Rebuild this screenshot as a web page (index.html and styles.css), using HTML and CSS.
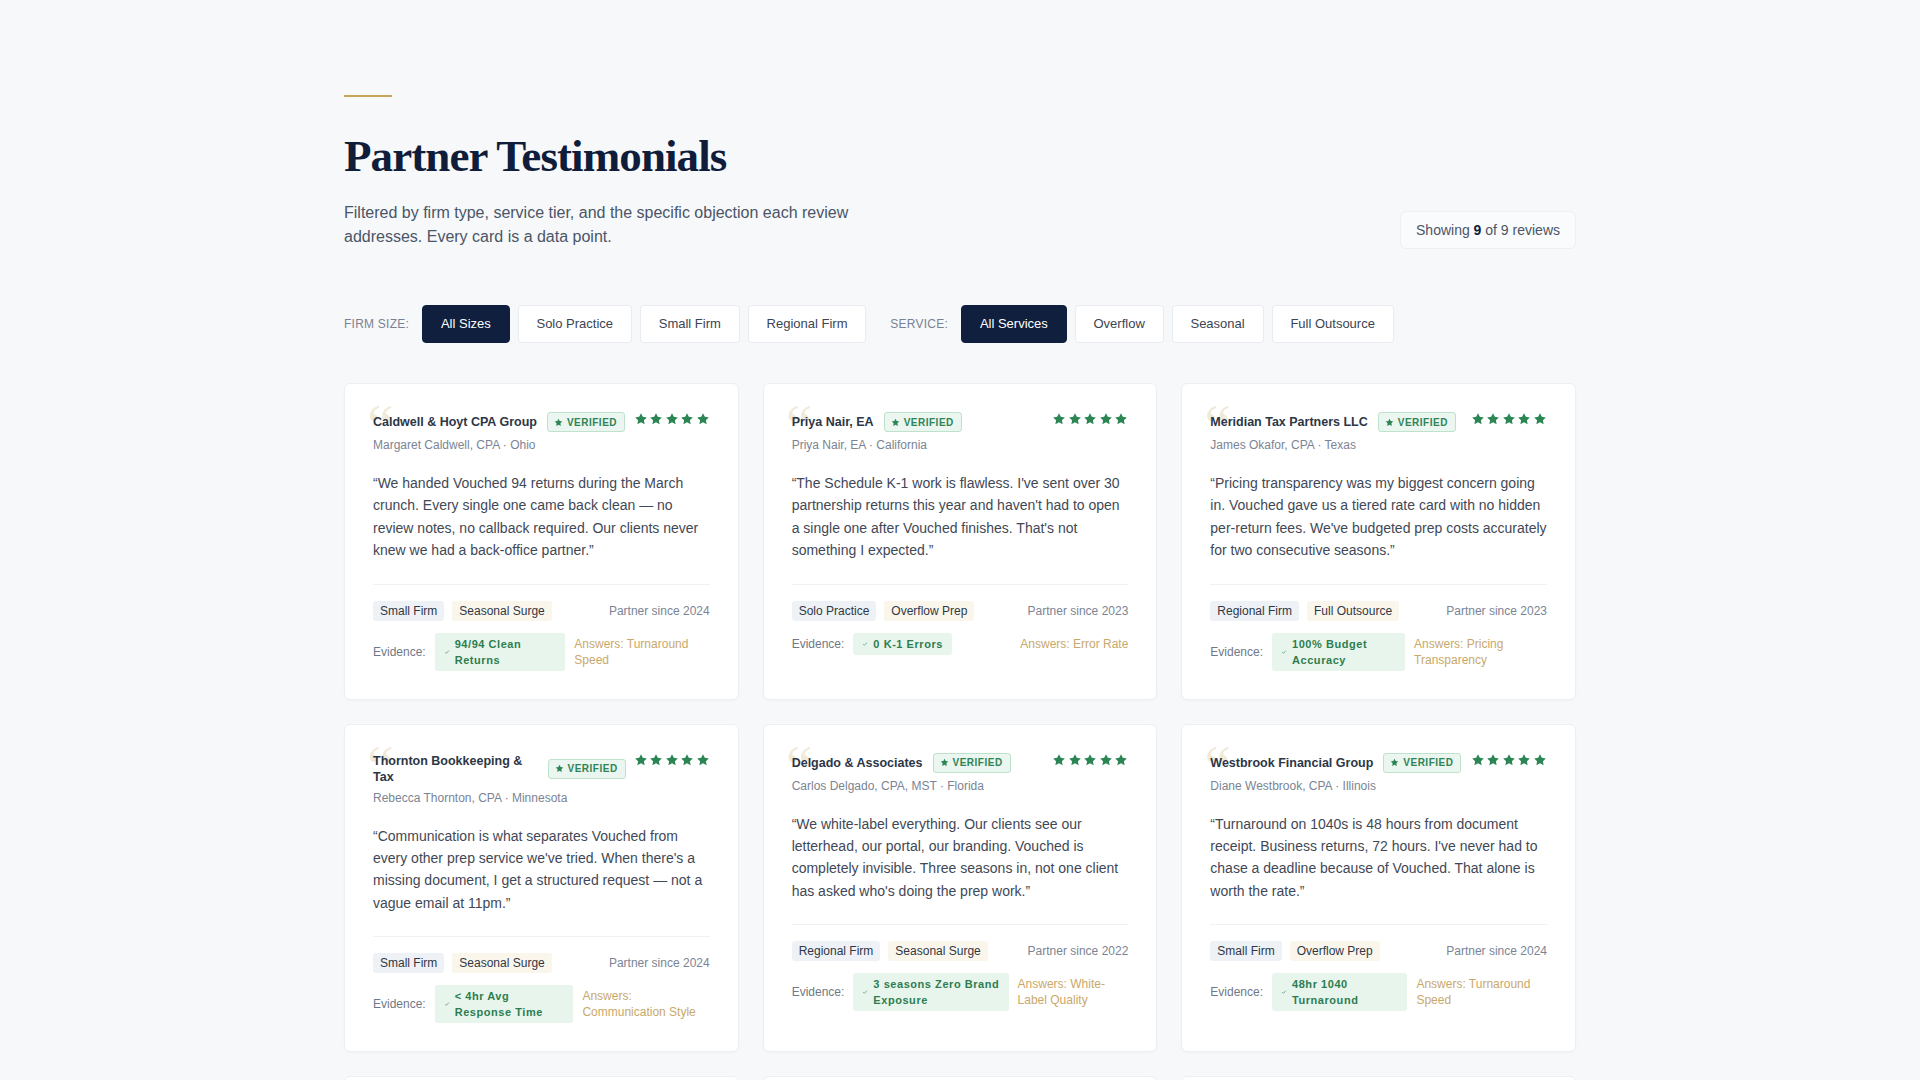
FILE: index.html
```html
<!DOCTYPE html>
<html lang="en">
<head>
<meta charset="utf-8">
<title>Partner Testimonials</title>
<link rel="stylesheet" href="styles.css">
</head>
<body>
<main class="page">
  <header class="head">
    <div class="accent"></div>
    <h1 class="title">Partner Testimonials</h1>
    <div class="intro">
      <p class="lede">Filtered by firm type, service tier, and the specific objection each review addresses. Every card is a data point.</p>
      <div class="count">Showing <b>9</b> of 9 reviews</div>
    </div>
  </header>

  <nav class="filters">
    <div class="group">
      <span class="label">Firm size:</span>
      <button class="chip on">All Sizes</button>
      <button class="chip">Solo Practice</button>
      <button class="chip">Small Firm</button>
      <button class="chip">Regional Firm</button>
    </div>
    <div class="group">
      <span class="label">Service:</span>
      <button class="chip on">All Services</button>
      <button class="chip">Overflow</button>
      <button class="chip">Seasonal</button>
      <button class="chip">Full Outsource</button>
    </div>
  </nav>

  <section class="grid">
    <article class="card">
      <span class="qmark">“</span>
      <div class="card-head">
        <div class="who">
          <div class="name-row"><span class="name">Caldwell &amp; Hoyt CPA Group</span><span class="verified"><svg class="vstar" viewBox="0 0 24 24"><path d="M12 2l3.09 6.26L22 9.27l-5 4.87 1.18 6.88L12 17.77l-6.18 3.25L7 14.14 2 9.27l6.91-1.01z"/></svg>VERIFIED</span></div>
          <div class="meta">Margaret Caldwell, CPA · Ohio</div>
        </div>
        <div class="stars"><svg viewBox="0 0 24 24"><path d="M12 2l3.09 6.26L22 9.27l-5 4.87 1.18 6.88L12 17.77l-6.18 3.25L7 14.14 2 9.27l6.91-1.01z"/></svg><svg viewBox="0 0 24 24"><path d="M12 2l3.09 6.26L22 9.27l-5 4.87 1.18 6.88L12 17.77l-6.18 3.25L7 14.14 2 9.27l6.91-1.01z"/></svg><svg viewBox="0 0 24 24"><path d="M12 2l3.09 6.26L22 9.27l-5 4.87 1.18 6.88L12 17.77l-6.18 3.25L7 14.14 2 9.27l6.91-1.01z"/></svg><svg viewBox="0 0 24 24"><path d="M12 2l3.09 6.26L22 9.27l-5 4.87 1.18 6.88L12 17.77l-6.18 3.25L7 14.14 2 9.27l6.91-1.01z"/></svg><svg viewBox="0 0 24 24"><path d="M12 2l3.09 6.26L22 9.27l-5 4.87 1.18 6.88L12 17.77l-6.18 3.25L7 14.14 2 9.27l6.91-1.01z"/></svg></div>
      </div>
      <p class="quote">“We handed Vouched 94 returns during the March crunch. Every single one came back clean — no review notes, no callback required. Our clients never knew we had a back-office partner.”</p>
      <div class="foot">
        <div class="tags"><span class="tag size">Small Firm</span><span class="tag svc">Seasonal Surge</span><span class="since">Partner since 2024</span></div>
        <div class="evidence"><span class="ev-label">Evidence:</span><span class="pill"><svg class="check" viewBox="0 0 10 10"><path d="M2 5.2l2 2 4-4.4"/></svg><span>94/94 Clean Returns</span></span><span class="answers">Answers: Turnaround Speed</span></div>
      </div>
    </article>

    <article class="card">
      <span class="qmark">“</span>
      <div class="card-head">
        <div class="who">
          <div class="name-row"><span class="name">Priya Nair, EA</span><span class="verified"><svg class="vstar" viewBox="0 0 24 24"><path d="M12 2l3.09 6.26L22 9.27l-5 4.87 1.18 6.88L12 17.77l-6.18 3.25L7 14.14 2 9.27l6.91-1.01z"/></svg>VERIFIED</span></div>
          <div class="meta">Priya Nair, EA · California</div>
        </div>
        <div class="stars"><svg viewBox="0 0 24 24"><path d="M12 2l3.09 6.26L22 9.27l-5 4.87 1.18 6.88L12 17.77l-6.18 3.25L7 14.14 2 9.27l6.91-1.01z"/></svg><svg viewBox="0 0 24 24"><path d="M12 2l3.09 6.26L22 9.27l-5 4.87 1.18 6.88L12 17.77l-6.18 3.25L7 14.14 2 9.27l6.91-1.01z"/></svg><svg viewBox="0 0 24 24"><path d="M12 2l3.09 6.26L22 9.27l-5 4.87 1.18 6.88L12 17.77l-6.18 3.25L7 14.14 2 9.27l6.91-1.01z"/></svg><svg viewBox="0 0 24 24"><path d="M12 2l3.09 6.26L22 9.27l-5 4.87 1.18 6.88L12 17.77l-6.18 3.25L7 14.14 2 9.27l6.91-1.01z"/></svg><svg viewBox="0 0 24 24"><path d="M12 2l3.09 6.26L22 9.27l-5 4.87 1.18 6.88L12 17.77l-6.18 3.25L7 14.14 2 9.27l6.91-1.01z"/></svg></div>
      </div>
      <p class="quote">“The Schedule K-1 work is flawless. I've sent over 30 partnership returns this year and haven't had to open a single one after Vouched finishes. That's not something I expected.”</p>
      <div class="foot">
        <div class="tags"><span class="tag size">Solo Practice</span><span class="tag svc">Overflow Prep</span><span class="since">Partner since 2023</span></div>
        <div class="evidence"><span class="ev-label">Evidence:</span><span class="pill"><svg class="check" viewBox="0 0 10 10"><path d="M2 5.2l2 2 4-4.4"/></svg><span>0 K-1 Errors</span></span><span class="answers">Answers: Error Rate</span></div>
      </div>
    </article>

    <article class="card">
      <span class="qmark">“</span>
      <div class="card-head">
        <div class="who">
          <div class="name-row"><span class="name">Meridian Tax Partners LLC</span><span class="verified"><svg class="vstar" viewBox="0 0 24 24"><path d="M12 2l3.09 6.26L22 9.27l-5 4.87 1.18 6.88L12 17.77l-6.18 3.25L7 14.14 2 9.27l6.91-1.01z"/></svg>VERIFIED</span></div>
          <div class="meta">James Okafor, CPA · Texas</div>
        </div>
        <div class="stars"><svg viewBox="0 0 24 24"><path d="M12 2l3.09 6.26L22 9.27l-5 4.87 1.18 6.88L12 17.77l-6.18 3.25L7 14.14 2 9.27l6.91-1.01z"/></svg><svg viewBox="0 0 24 24"><path d="M12 2l3.09 6.26L22 9.27l-5 4.87 1.18 6.88L12 17.77l-6.18 3.25L7 14.14 2 9.27l6.91-1.01z"/></svg><svg viewBox="0 0 24 24"><path d="M12 2l3.09 6.26L22 9.27l-5 4.87 1.18 6.88L12 17.77l-6.18 3.25L7 14.14 2 9.27l6.91-1.01z"/></svg><svg viewBox="0 0 24 24"><path d="M12 2l3.09 6.26L22 9.27l-5 4.87 1.18 6.88L12 17.77l-6.18 3.25L7 14.14 2 9.27l6.91-1.01z"/></svg><svg viewBox="0 0 24 24"><path d="M12 2l3.09 6.26L22 9.27l-5 4.87 1.18 6.88L12 17.77l-6.18 3.25L7 14.14 2 9.27l6.91-1.01z"/></svg></div>
      </div>
      <p class="quote">“Pricing transparency was my biggest concern going in. Vouched gave us a tiered rate card with no hidden per-return fees. We've budgeted prep costs accurately for two consecutive seasons.”</p>
      <div class="foot">
        <div class="tags"><span class="tag size">Regional Firm</span><span class="tag svc">Full Outsource</span><span class="since">Partner since 2023</span></div>
        <div class="evidence"><span class="ev-label">Evidence:</span><span class="pill"><svg class="check" viewBox="0 0 10 10"><path d="M2 5.2l2 2 4-4.4"/></svg><span>100% Budget Accuracy</span></span><span class="answers">Answers: Pricing Transparency</span></div>
      </div>
    </article>

    <article class="card">
      <span class="qmark">“</span>
      <div class="card-head">
        <div class="who">
          <div class="name-row"><span class="name">Thornton Bookkeeping &amp; Tax</span><span class="verified"><svg class="vstar" viewBox="0 0 24 24"><path d="M12 2l3.09 6.26L22 9.27l-5 4.87 1.18 6.88L12 17.77l-6.18 3.25L7 14.14 2 9.27l6.91-1.01z"/></svg>VERIFIED</span></div>
          <div class="meta">Rebecca Thornton, CPA · Minnesota</div>
        </div>
        <div class="stars"><svg viewBox="0 0 24 24"><path d="M12 2l3.09 6.26L22 9.27l-5 4.87 1.18 6.88L12 17.77l-6.18 3.25L7 14.14 2 9.27l6.91-1.01z"/></svg><svg viewBox="0 0 24 24"><path d="M12 2l3.09 6.26L22 9.27l-5 4.87 1.18 6.88L12 17.77l-6.18 3.25L7 14.14 2 9.27l6.91-1.01z"/></svg><svg viewBox="0 0 24 24"><path d="M12 2l3.09 6.26L22 9.27l-5 4.87 1.18 6.88L12 17.77l-6.18 3.25L7 14.14 2 9.27l6.91-1.01z"/></svg><svg viewBox="0 0 24 24"><path d="M12 2l3.09 6.26L22 9.27l-5 4.87 1.18 6.88L12 17.77l-6.18 3.25L7 14.14 2 9.27l6.91-1.01z"/></svg><svg viewBox="0 0 24 24"><path d="M12 2l3.09 6.26L22 9.27l-5 4.87 1.18 6.88L12 17.77l-6.18 3.25L7 14.14 2 9.27l6.91-1.01z"/></svg></div>
      </div>
      <p class="quote">“Communication is what separates Vouched from every other prep service we've tried. When there's a missing document, I get a structured request — not a vague email at 11pm.”</p>
      <div class="foot">
        <div class="tags"><span class="tag size">Small Firm</span><span class="tag svc">Seasonal Surge</span><span class="since">Partner since 2024</span></div>
        <div class="evidence"><span class="ev-label">Evidence:</span><span class="pill"><svg class="check" viewBox="0 0 10 10"><path d="M2 5.2l2 2 4-4.4"/></svg><span>&lt; 4hr Avg Response Time</span></span><span class="answers">Answers: Communication Style</span></div>
      </div>
    </article>

    <article class="card">
      <span class="qmark">“</span>
      <div class="card-head">
        <div class="who">
          <div class="name-row"><span class="name">Delgado &amp; Associates</span><span class="verified"><svg class="vstar" viewBox="0 0 24 24"><path d="M12 2l3.09 6.26L22 9.27l-5 4.87 1.18 6.88L12 17.77l-6.18 3.25L7 14.14 2 9.27l6.91-1.01z"/></svg>VERIFIED</span></div>
          <div class="meta">Carlos Delgado, CPA, MST · Florida</div>
        </div>
        <div class="stars"><svg viewBox="0 0 24 24"><path d="M12 2l3.09 6.26L22 9.27l-5 4.87 1.18 6.88L12 17.77l-6.18 3.25L7 14.14 2 9.27l6.91-1.01z"/></svg><svg viewBox="0 0 24 24"><path d="M12 2l3.09 6.26L22 9.27l-5 4.87 1.18 6.88L12 17.77l-6.18 3.25L7 14.14 2 9.27l6.91-1.01z"/></svg><svg viewBox="0 0 24 24"><path d="M12 2l3.09 6.26L22 9.27l-5 4.87 1.18 6.88L12 17.77l-6.18 3.25L7 14.14 2 9.27l6.91-1.01z"/></svg><svg viewBox="0 0 24 24"><path d="M12 2l3.09 6.26L22 9.27l-5 4.87 1.18 6.88L12 17.77l-6.18 3.25L7 14.14 2 9.27l6.91-1.01z"/></svg><svg viewBox="0 0 24 24"><path d="M12 2l3.09 6.26L22 9.27l-5 4.87 1.18 6.88L12 17.77l-6.18 3.25L7 14.14 2 9.27l6.91-1.01z"/></svg></div>
      </div>
      <p class="quote">“We white-label everything. Our clients see our letterhead, our portal, our branding. Vouched is completely invisible. Three seasons in, not one client has asked who's doing the prep work.”</p>
      <div class="foot">
        <div class="tags"><span class="tag size">Regional Firm</span><span class="tag svc">Seasonal Surge</span><span class="since">Partner since 2022</span></div>
        <div class="evidence"><span class="ev-label">Evidence:</span><span class="pill"><svg class="check" viewBox="0 0 10 10"><path d="M2 5.2l2 2 4-4.4"/></svg><span>3 seasons Zero Brand Exposure</span></span><span class="answers">Answers: White-Label Quality</span></div>
      </div>
    </article>

    <article class="card">
      <span class="qmark">“</span>
      <div class="card-head">
        <div class="who">
          <div class="name-row"><span class="name">Westbrook Financial Group</span><span class="verified"><svg class="vstar" viewBox="0 0 24 24"><path d="M12 2l3.09 6.26L22 9.27l-5 4.87 1.18 6.88L12 17.77l-6.18 3.25L7 14.14 2 9.27l6.91-1.01z"/></svg>VERIFIED</span></div>
          <div class="meta">Diane Westbrook, CPA · Illinois</div>
        </div>
        <div class="stars"><svg viewBox="0 0 24 24"><path d="M12 2l3.09 6.26L22 9.27l-5 4.87 1.18 6.88L12 17.77l-6.18 3.25L7 14.14 2 9.27l6.91-1.01z"/></svg><svg viewBox="0 0 24 24"><path d="M12 2l3.09 6.26L22 9.27l-5 4.87 1.18 6.88L12 17.77l-6.18 3.25L7 14.14 2 9.27l6.91-1.01z"/></svg><svg viewBox="0 0 24 24"><path d="M12 2l3.09 6.26L22 9.27l-5 4.87 1.18 6.88L12 17.77l-6.18 3.25L7 14.14 2 9.27l6.91-1.01z"/></svg><svg viewBox="0 0 24 24"><path d="M12 2l3.09 6.26L22 9.27l-5 4.87 1.18 6.88L12 17.77l-6.18 3.25L7 14.14 2 9.27l6.91-1.01z"/></svg><svg viewBox="0 0 24 24"><path d="M12 2l3.09 6.26L22 9.27l-5 4.87 1.18 6.88L12 17.77l-6.18 3.25L7 14.14 2 9.27l6.91-1.01z"/></svg></div>
      </div>
      <p class="quote">“Turnaround on 1040s is 48 hours from document receipt. Business returns, 72 hours. I've never had to chase a deadline because of Vouched. That alone is worth the rate.”</p>
      <div class="foot">
        <div class="tags"><span class="tag size">Small Firm</span><span class="tag svc">Overflow Prep</span><span class="since">Partner since 2024</span></div>
        <div class="evidence"><span class="ev-label">Evidence:</span><span class="pill"><svg class="check" viewBox="0 0 10 10"><path d="M2 5.2l2 2 4-4.4"/></svg><span>48hr 1040 Turnaround</span></span><span class="answers">Answers: Turnaround Speed</span></div>
      </div>
    </article>

    <article class="card">
      <span class="qmark">“</span>
      <div class="card-head">
        <div class="who">
          <div class="name-row"><span class="name">Summit Ridge Accounting</span><span class="verified"><svg class="vstar" viewBox="0 0 24 24"><path d="M12 2l3.09 6.26L22 9.27l-5 4.87 1.18 6.88L12 17.77l-6.18 3.25L7 14.14 2 9.27l6.91-1.01z"/></svg>VERIFIED</span></div>
          <div class="meta">Kevin Larsen, CPA · Colorado</div>
        </div>
        <div class="stars"><svg viewBox="0 0 24 24"><path d="M12 2l3.09 6.26L22 9.27l-5 4.87 1.18 6.88L12 17.77l-6.18 3.25L7 14.14 2 9.27l6.91-1.01z"/></svg><svg viewBox="0 0 24 24"><path d="M12 2l3.09 6.26L22 9.27l-5 4.87 1.18 6.88L12 17.77l-6.18 3.25L7 14.14 2 9.27l6.91-1.01z"/></svg><svg viewBox="0 0 24 24"><path d="M12 2l3.09 6.26L22 9.27l-5 4.87 1.18 6.88L12 17.77l-6.18 3.25L7 14.14 2 9.27l6.91-1.01z"/></svg><svg viewBox="0 0 24 24"><path d="M12 2l3.09 6.26L22 9.27l-5 4.87 1.18 6.88L12 17.77l-6.18 3.25L7 14.14 2 9.27l6.91-1.01z"/></svg><svg viewBox="0 0 24 24"><path d="M12 2l3.09 6.26L22 9.27l-5 4.87 1.18 6.88L12 17.77l-6.18 3.25L7 14.14 2 9.27l6.91-1.01z"/></svg></div>
      </div>
      <p class="quote">“As a solo practitioner I was buried every April. Now Vouched handles the prep year-round and I spend my time on advisory work my clients actually pay a premium for.”</p>
      <div class="foot">
        <div class="tags"><span class="tag size">Solo Practice</span><span class="tag svc">Full Outsource</span><span class="since">Partner since 2022</span></div>
        <div class="evidence"><span class="ev-label">Evidence:</span><span class="pill"><svg class="check" viewBox="0 0 10 10"><path d="M2 5.2l2 2 4-4.4"/></svg><span>3x Advisory Hours</span></span><span class="answers">Answers: Capacity</span></div>
      </div>
    </article>

    <article class="card">
      <span class="qmark">“</span>
      <div class="card-head">
        <div class="who">
          <div class="name-row"><span class="name">Bayview Tax Services</span><span class="verified"><svg class="vstar" viewBox="0 0 24 24"><path d="M12 2l3.09 6.26L22 9.27l-5 4.87 1.18 6.88L12 17.77l-6.18 3.25L7 14.14 2 9.27l6.91-1.01z"/></svg>VERIFIED</span></div>
          <div class="meta">Angela Brooks, EA · Oregon</div>
        </div>
        <div class="stars"><svg viewBox="0 0 24 24"><path d="M12 2l3.09 6.26L22 9.27l-5 4.87 1.18 6.88L12 17.77l-6.18 3.25L7 14.14 2 9.27l6.91-1.01z"/></svg><svg viewBox="0 0 24 24"><path d="M12 2l3.09 6.26L22 9.27l-5 4.87 1.18 6.88L12 17.77l-6.18 3.25L7 14.14 2 9.27l6.91-1.01z"/></svg><svg viewBox="0 0 24 24"><path d="M12 2l3.09 6.26L22 9.27l-5 4.87 1.18 6.88L12 17.77l-6.18 3.25L7 14.14 2 9.27l6.91-1.01z"/></svg><svg viewBox="0 0 24 24"><path d="M12 2l3.09 6.26L22 9.27l-5 4.87 1.18 6.88L12 17.77l-6.18 3.25L7 14.14 2 9.27l6.91-1.01z"/></svg><svg viewBox="0 0 24 24"><path d="M12 2l3.09 6.26L22 9.27l-5 4.87 1.18 6.88L12 17.77l-6.18 3.25L7 14.14 2 9.27l6.91-1.01z"/></svg></div>
      </div>
      <p class="quote">“Security was non-negotiable for us. Vouched walked our IT consultant through every control, and we passed our own compliance review without a single finding.”</p>
      <div class="foot">
        <div class="tags"><span class="tag size">Small Firm</span><span class="tag svc">Overflow Prep</span><span class="since">Partner since 2023</span></div>
        <div class="evidence"><span class="ev-label">Evidence:</span><span class="pill"><svg class="check" viewBox="0 0 10 10"><path d="M2 5.2l2 2 4-4.4"/></svg><span>0 Audit Findings</span></span><span class="answers">Answers: Data Security</span></div>
      </div>
    </article>

    <article class="card">
      <span class="qmark">“</span>
      <div class="card-head">
        <div class="who">
          <div class="name-row"><span class="name">Harborline CPA Partners</span><span class="verified"><svg class="vstar" viewBox="0 0 24 24"><path d="M12 2l3.09 6.26L22 9.27l-5 4.87 1.18 6.88L12 17.77l-6.18 3.25L7 14.14 2 9.27l6.91-1.01z"/></svg>VERIFIED</span></div>
          <div class="meta">Marcus Hale, CPA · Massachusetts</div>
        </div>
        <div class="stars"><svg viewBox="0 0 24 24"><path d="M12 2l3.09 6.26L22 9.27l-5 4.87 1.18 6.88L12 17.77l-6.18 3.25L7 14.14 2 9.27l6.91-1.01z"/></svg><svg viewBox="0 0 24 24"><path d="M12 2l3.09 6.26L22 9.27l-5 4.87 1.18 6.88L12 17.77l-6.18 3.25L7 14.14 2 9.27l6.91-1.01z"/></svg><svg viewBox="0 0 24 24"><path d="M12 2l3.09 6.26L22 9.27l-5 4.87 1.18 6.88L12 17.77l-6.18 3.25L7 14.14 2 9.27l6.91-1.01z"/></svg><svg viewBox="0 0 24 24"><path d="M12 2l3.09 6.26L22 9.27l-5 4.87 1.18 6.88L12 17.77l-6.18 3.25L7 14.14 2 9.27l6.91-1.01z"/></svg><svg viewBox="0 0 24 24"><path d="M12 2l3.09 6.26L22 9.27l-5 4.87 1.18 6.88L12 17.77l-6.18 3.25L7 14.14 2 9.27l6.91-1.01z"/></svg></div>
      </div>
      <p class="quote">“We scaled from 400 to 1,100 returns without adding a single seasonal hire. Vouched absorbed the volume and the review queue never backed up once.”</p>
      <div class="foot">
        <div class="tags"><span class="tag size">Regional Firm</span><span class="tag svc">Full Outsource</span><span class="since">Partner since 2022</span></div>
        <div class="evidence"><span class="ev-label">Evidence:</span><span class="pill"><svg class="check" viewBox="0 0 10 10"><path d="M2 5.2l2 2 4-4.4"/></svg><span>2.75x Volume Growth</span></span><span class="answers">Answers: Scalability</span></div>
      </div>
    </article>
  </section>
</main>
</body>
</html>
```

FILE: styles.css
```css
* { box-sizing: border-box; }

body {
  margin: 0;
  background: #f7f8fa;
  font-family: "Liberation Sans", Arial, sans-serif;
  color: #1f2937;
}

.page {
  max-width: 1280px;
  margin: 0 auto;
  padding: 95px 24px 80px;
}

.accent {
  width: 48px;
  height: 2px;
  background: #c9a55c;
  margin-bottom: 32px;
}

.title {
  margin: 0;
  font-family: "Liberation Serif", "Times New Roman", serif;
  font-weight: 700;
  font-size: 45px;
  line-height: 54px;
  letter-spacing: -0.02em;
  color: #0f1d3a;
}

.intro {
  display: flex;
  justify-content: space-between;
  align-items: flex-end;
  margin-top: 18px;
}

.lede {
  margin: 0;
  max-width: 560px;
  font-size: 16px;
  line-height: 24px;
  color: #4a5567;
}

.count {
  padding: 9px 15px;
  font-size: 14px;
  line-height: 18px;
  color: #4a5567;
  background: #fafbfc;
  border: 1px solid #eef0f3;
  border-radius: 6px;
}

.count b { color: #0f1d3a; }

.filters {
  display: flex;
  align-items: center;
  gap: 24px;
  margin-top: 56px;
}

.group {
  display: flex;
  align-items: center;
  gap: 8px;
}

.label {
  font-size: 12px;
  letter-spacing: 0.02em;
  text-transform: uppercase;
  color: #7a8291;
  margin-right: 5px;
}

.chip {
  padding: 9px 17.85px;
  font-family: "Liberation Sans", Arial, sans-serif;
  font-size: 13px;
  line-height: 18px;
  color: #3b4453;
  background: #fff;
  border: 1px solid #e9ecf0;
  border-radius: 4px;
}

.chip.on {
  background: #0f1f3d;
  border-color: #0f1f3d;
  color: #fff;
}

.grid {
  display: grid;
  grid-template-columns: repeat(3, 1fr);
  gap: 24px;
  margin-top: 40px;
}

.card {
  position: relative;
  background: #fff;
  border: 1px solid #edf0f3;
  border-radius: 6px;
  padding: 28px;
  box-shadow: 0 1px 2px rgba(16, 24, 40, 0.03);
}

.qmark {
  position: absolute;
  top: 11px;
  left: 22px;
  font-family: "Liberation Serif", "Times New Roman", serif;
  font-size: 60px;
  line-height: 1;
  color: #f2ead9;
  pointer-events: none;
}

.card-head {
  position: relative;
  display: flex;
  justify-content: space-between;
  align-items: flex-start;
  gap: 8px;
}

.who { flex: 0 1 auto; min-width: 0; }

.name-row {
  display: flex;
  align-items: center;
  gap: 10px;
}

.name {
  font-size: 12.5px;
  line-height: 16px;
  font-weight: 700;
  color: #2d3646;
}

.verified {
  flex: none;
  display: inline-flex;
  align-items: center;
  gap: 4px;
  height: 20px;
  padding: 0 7px 0 6px;
  font-size: 10px;
  font-weight: 700;
  letter-spacing: 0.05em;
  color: #2f8456;
  background: #eaf6ef;
  border: 1px solid #bfe2cd;
  border-radius: 3px;
}

.vstar { width: 9px; height: 9px; fill: #2f8456; }

.meta {
  margin-top: 4px;
  font-size: 12px;
  line-height: 18px;
  color: #7b8494;
}

.stars {
  flex: none;
  display: flex;
  gap: 1.5px;
}

.stars svg { width: 14px; height: 14px; fill: #2b8654; }

.quote {
  position: relative;
  margin: 18px 0 22px;
  font-size: 14px;
  line-height: 22.4px;
  color: #3f4856;
}

.foot {
  border-top: 1px solid #eef0f3;
  padding-top: 16px;
}

.tags {
  display: flex;
  align-items: center;
  gap: 8px;
}

.tag {
  padding: 2px 7px;
  font-size: 12px;
  line-height: 16px;
  color: #2f3846;
  border-radius: 3px;
}

.tag.size { background: #eef1f5; }
.tag.svc { background: #fbf6ec; }

.since {
  margin-left: auto;
  font-size: 12px;
  line-height: 16px;
  color: #7b8494;
}

.evidence {
  display: flex;
  align-items: center;
  gap: 8px;
  margin-top: 12px;
}

.ev-label {
  flex: none;
  font-size: 12px;
  line-height: 16px;
  color: #6f7888;
  margin-right: 1px;
}

.pill {
  display: flex;
  align-items: center;
  gap: 5px;
  padding: 3px 9px;
  font-size: 11px;
  line-height: 16px;
  font-weight: 700;
  letter-spacing: 0.05em;
  color: #2e7d50;
  background: #e7f5ed;
  border-radius: 3px;
}

.check {
  flex: none;
  width: 6px;
  height: 6px;
  fill: none;
  stroke: #6cb38b;
  stroke-width: 1.6;
}

.answers {
  margin-left: auto;
  padding-left: 1px;
  font-size: 12px;
  line-height: 16px;
  color: #c9a86b;
}
```
